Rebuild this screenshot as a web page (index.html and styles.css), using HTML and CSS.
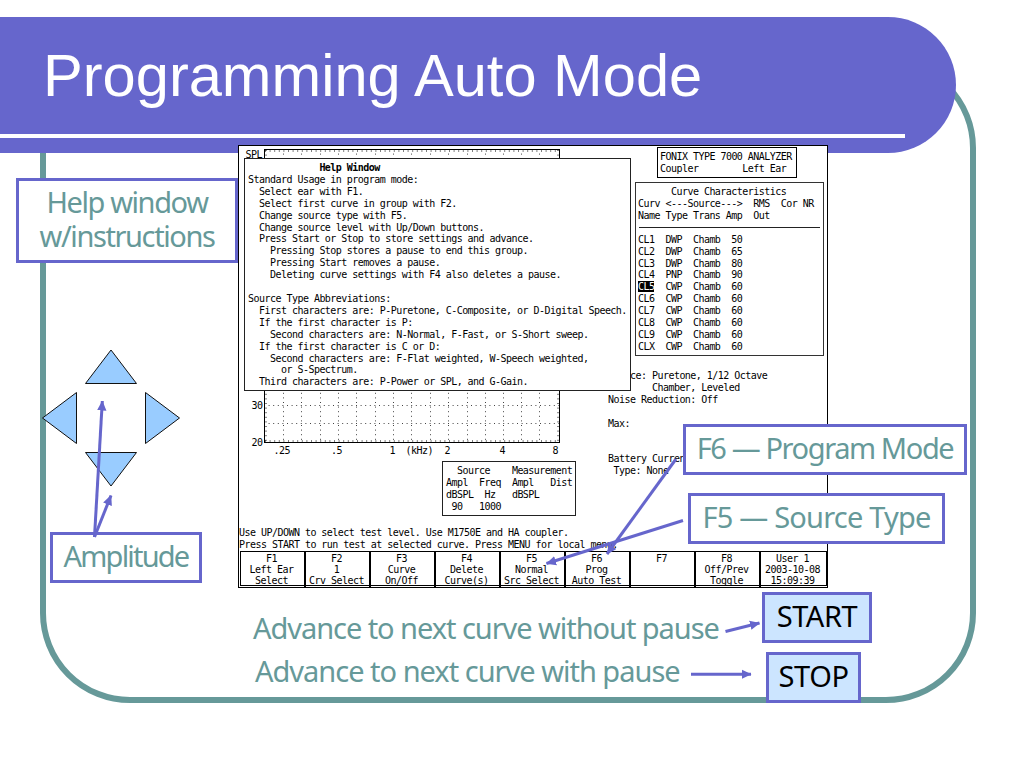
FILE: index.html
```
<!DOCTYPE html>
<html lang="en">
<head>
    <meta charset="UTF-8">
    <meta name="viewport" content="width=device-width, initial-scale=1.0">
    <title>Programming Auto Mode</title>
    <link rel="stylesheet" href="styles.css">
</head>
<body>
    <div class="slide">
        <div class="frame"></div>
        <header class="banner">
            <h1>Programming Auto Mode</h1>
            <div class="banner-line"></div>
        </header>

        <div class="callout help">Help window<br>w/instructions</div>

        <div class="screen">
            <div class="screen-main">
                <div class="left-col">
                    <svg class="chart" width="366" height="314" viewBox="0 0 366 314">
                        <g class="grid">
                            <path d="M44.5 3V296M62.5 3V296M81.5 3V296M99.5 3V296M117.5 3V296M136.5 3V296M154.5 3V296M172.5 3V296M191.5 3V296M209.5 3V296M228.5 3V296M246.5 3V296M264.5 3V296M282.5 3V296M300.5 3V296"/>
                            <path d="M25 259.5H320M25 277.5H320"/>
                        </g>
                        <rect class="plot" x="25.5" y="3.5" width="295" height="293"/>
                        <path class="ticks" d="M26 5H320M26 295H320M27 4V296M319 4V296"/>
                        <g class="chart-text">
                            <text x="6.5" y="12">SPL</text>
                            <text x="12.5" y="263">30</text>
                            <text x="12.5" y="300">20</text>
                            <text x="34.5" y="308">.25</text>
                            <text x="92" y="308">.5</text>
                            <text x="150.5" y="308">1</text>
                            <text x="166.5" y="308">(kHz)</text>
                            <text x="205.5" y="308">2</text>
                            <text x="260.5" y="308">4</text>
                            <text x="313.5" y="308">8</text>
                        </g>
                    </svg>
                    <pre class="source-box">  Source    Measurement
Ampl  Freq  Ampl   Dist
dBSPL  Hz   dBSPL
 90   1000</pre>
                </div>
                <div class="right-col">
                    <pre class="model-box">FONIX TYPE 7000 ANALYZER
Coupler        Left Ear</pre>
                    <div class="curve-box">
                        <pre>      Curve Characteristics
Curv &lt;---Source---&gt;  RMS  Cor NR
Name Type Trans Amp  Out</pre>
                        <div class="rule"></div>
                        <pre>CL1  DWP  Chamb  50
CL2  DWP  Chamb  65
CL3  DWP  Chamb  80
CL4  PNP  Chamb  90
<span class="selected">CL5</span>  CWP  Chamb  60
CL6  CWP  Chamb  60
CL7  CWP  Chamb  60
CL8  CWP  Chamb  60
CL9  CWP  Chamb  60
CLX  CWP  Chamb  60</pre>
                    </div>
                    <pre class="status">Source: Puretone, 1/12 Octave
        Chamber, Leveled
Noise Reduction: Off

Max:


Battery Current:
 Type: None</pre>
                </div>
            </div>
            <pre class="prompt">Use UP/DOWN to select test level. Use M1750E and HA coupler.
Press START to run test at selected curve. Press MENU for local menu.</pre>
            <div class="keys">
                <div>F1<br>Left Ear<br>Select</div>
                <div>F2<br>1<br>Crv Select</div>
                <div>F3<br>Curve<br>On/Off</div>
                <div>F4<br>Delete<br>Curve(s)</div>
                <div>F5<br>Normal<br>Src Select</div>
                <div>F6<br>Prog<br>Auto Test</div>
                <div>F7</div>
                <div>F8<br>Off/Prev<br>Toggle</div>
                <div>User 1<br>2003-10-08<br>15:09:39</div>
            </div>
            <pre class="help-window"><b>             Help Window</b>
Standard Usage in program mode:
  Select ear with F1.
  Select first curve in group with F2.
  Change source type with F5.
  Change source level with Up/Down buttons.
  Press Start or Stop to store settings and advance.
    Pressing Stop stores a pause to end this group.
    Pressing Start removes a pause.
    Deleting curve settings with F4 also deletes a pause.

Source Type Abbreviations:
  First characters are: P-Puretone, C-Composite, or D-Digital Speech.
  If the first character is P:
    Second characters are: N-Normal, F-Fast, or S-Short sweep.
  If the first character is C or D:
    Second characters are: F-Flat weighted, W-Speech weighted,
      or S-Spectrum.
  Third characters are: P-Power or SPL, and G-Gain.</pre>
        </div>

        <div class="callout amplitude">Amplitude</div>
        <div class="callout f6">F6 — Program Mode</div>
        <div class="callout f5">F5 — Source Type</div>
        <div class="note without">Advance to next curve without pause</div>
        <div class="note with">Advance to next curve with pause</div>
        <div class="callout button start">START</div>
        <div class="callout button stop">STOP</div>

        <svg class="overlay" width="1024" height="768" viewBox="0 0 1024 768">
            <defs>
                <marker id="head" markerUnits="userSpaceOnUse" markerWidth="10" markerHeight="10" refX="9.5" refY="5" orient="auto">
                    <path d="M0 0.3L10 5L0 9.7Z" fill="#6666cc"/>
                </marker>
            </defs>
            <g class="triangles">
                <path d="M111 350L136.5 383.5H85.5Z"/>
                <path d="M111 486L136.5 452.5H85.5Z"/>
                <path d="M42.5 418L76.5 392.5V443.5Z"/>
                <path d="M179.5 418L145.5 392.5V443.5Z"/>
            </g>
            <g class="arrows">
                <path d="M94.5 537L102.3 401"/>
                <path d="M94.5 537L111 495.5"/>
                <path d="M676 459L607 554"/>
                <path d="M683 520.5L546.5 563.5"/>
                <path d="M725.5 631.5L759.5 623"/>
                <path d="M691 674.3H751"/>
            </g>
        </svg>
    </div>
</body>
</html>
```
FILE: styles.css
```
body {
    margin: 0;
    background: #fff;
}
.slide {
    position: relative;
    width: 1024px;
    height: 768px;
    overflow: hidden;
    background: #fff;
    font-family: "Noto Sans", sans-serif;
}
.frame {
    position: absolute;
    left: 40px;
    top: 58px;
    width: 936px;
    height: 645px;
    box-sizing: border-box;
    border: 6px solid #669999;
    border-radius: 90px;
}
.banner {
    position: absolute;
    left: 0;
    top: 17px;
    width: 956px;
    height: 136px;
    background: #6666cc;
    border-radius: 0 68px 68px 0;
}
.banner h1 {
    margin: 0;
    padding: 25px 0 0 43px;
    height: 92px;
    font: 400 59.6px/68px "Liberation Sans", sans-serif;
    color: #fff;
    white-space: nowrap;
}
.banner-line {
    width: 905px;
    height: 4px;
    background: #fff;
}

/* labels around the screen */
.callout {
    position: absolute;
    box-sizing: border-box;
    display: flex;
    align-items: center;
    justify-content: center;
    padding-bottom: 3px;
    text-align: center;
    border: 3px solid #6666cc;
    background: #fff;
    color: #669999;
    font-size: 29px;
    line-height: 34px;
    letter-spacing: -1.4px;
    white-space: nowrap;
}
.help {
    left: 16px;
    top: 178px;
    width: 222px;
    height: 85px;
}
.amplitude {
    left: 50px;
    top: 532px;
    width: 152px;
    height: 51px;
    letter-spacing: -1.8px;
}
.f6 {
    left: 683px;
    top: 424px;
    width: 284px;
    height: 51px;
}
.f5 {
    left: 688px;
    top: 493px;
    width: 257px;
    height: 51px;
    letter-spacing: -0.8px;
}
.button {
    background: #cce5ff;
    color: #000;
    letter-spacing: -0.4px;
}
.start {
    left: 762px;
    top: 592px;
    width: 110px;
    height: 51px;
}
.stop {
    left: 766px;
    top: 652px;
    width: 95px;
    height: 51px;
}
.note {
    position: absolute;
    color: #669999;
    font-size: 29px;
    line-height: 34px;
    letter-spacing: -1.05px;
    white-space: nowrap;
}
.without {
    left: 253px;
    top: 611px;
}
.with {
    left: 255px;
    top: 654px;
    letter-spacing: -1px;
}

/* analyzer screen */
.screen {
    position: absolute;
    left: 238px;
    top: 145px;
    width: 590px;
    height: 443px;
    box-sizing: border-box;
    border: 1px solid #000;
    background: #fff;
    color: #000;
}
.screen pre,
.keys,
.chart-text {
    margin: 0;
    font-family: "DejaVu Sans Mono", monospace;
    font-size: 10px;
    letter-spacing: -0.53px;
    line-height: 11.9px;
}
.screen-main {
    display: flex;
    height: 381px;
}
.left-col {
    width: 366px;
}
.chart {
    display: block;
}
.grid path {
    fill: none;
    stroke: #444;
    stroke-width: 1;
    stroke-dasharray: 1 3.6;
}
.plot {
    fill: none;
    stroke: #000;
}
.ticks {
    fill: none;
    stroke: #000;
    stroke-dasharray: 1 3.6;
}
.screen .source-box {
    box-sizing: border-box;
    width: 134px;
    height: 55px;
    margin: 1px 0 0 203px;
    padding: 3px 0 0 3px;
    border: 1px solid #222;
}
.right-col {
    width: 222px;
}
.screen .model-box {
    box-sizing: border-box;
    width: 140px;
    height: 31px;
    margin: 1px 0 0 52px;
    padding: 3px 0 0 2px;
    border: 1px solid #000;
}
.curve-box {
    box-sizing: border-box;
    width: 189px;
    height: 174px;
    margin: 4px 0 0 30px;
    padding: 3px 2px 0;
    border: 1px solid #333;
}
.rule {
    height: 1px;
    margin: 5px 1px 6px;
    background: #222;
}
.selected {
    background: #000;
    color: #fff;
}
.screen .status {
    margin: 14px 0 0 3px;
}
.screen .prompt {
    height: 24px;
}
.keys {
    display: grid;
    grid-template-columns: 63px repeat(7, 65px) 1fr;
    width: 587px;
    height: 35px;
    margin-left: 1px;
    box-sizing: border-box;
    border: 1px solid #000;
    text-align: center;
    line-height: 11.2px;
}
.keys div {
    padding: 1px 2px 0 0;
}
.keys div + div {
    border-left: 2px solid #000;
}
.help-window {
    position: absolute;
    left: 5px;
    top: 12px;
    width: 387px;
    height: 233px;
    box-sizing: border-box;
    padding: 3px 0 0 3px;
    border: 1px solid #222;
    background: #fff;
}

.overlay {
    position: absolute;
    left: 0;
    top: 0;
}
.triangles path {
    fill: #99ccff;
    stroke: #111;
    stroke-width: 1;
}
.arrows path {
    fill: none;
    stroke: #6666cc;
    stroke-width: 3;
    marker-end: url(#head);
}
```
